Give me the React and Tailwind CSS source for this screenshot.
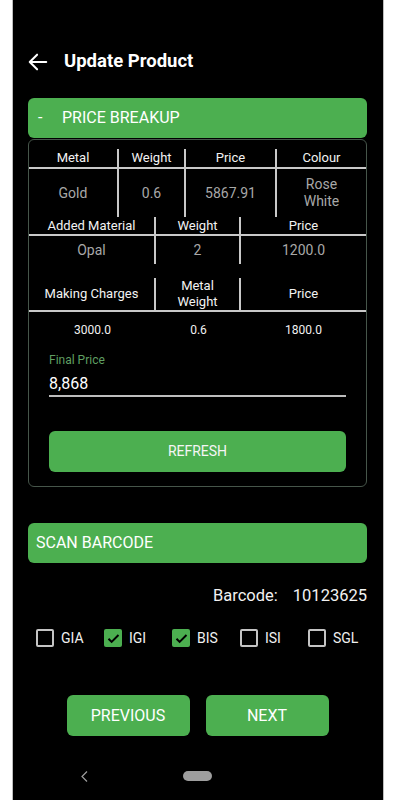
import { useState } from 'react';

const GREEN = 'bg-[#4caf50]';

function Cell({ children, className = '', divider = true }) {
  return (
    <div className={`flex items-center justify-center text-center leading-[16px] ${divider ? 'border-r-2 border-[#c9c9c9]' : ''} ${className}`}>
      {children}
    </div>
  );
}

function Check({ label, checked, onToggle }) {
  return (
    <button type="button" onClick={onToggle} className="flex w-[68px] shrink-0 items-center gap-[7px]">
      {checked ? (
        <span className="flex h-[18px] w-[18px] items-center justify-center rounded-[2px] bg-[#4caf50]">
          <svg width="15" height="15" viewBox="0 0 24 24" fill="none" stroke="#000" strokeWidth="3.2">
            <path d="M4 12.5l5 5L20 6.5" />
          </svg>
        </span>
      ) : (
        <span className="h-[18px] w-[18px] rounded-[2px] border-2 border-[#c4c4c4]" />
      )}
      <span className="text-[14px] text-[#f0f0f0]">{label}</span>
    </button>
  );
}

export default function App() {
  const [certs, setCerts] = useState({ GIA: false, IGI: true, BIS: true, ISI: false, SGL: false });

  return (
    <div className="flex h-[800px] w-[400px] overflow-hidden bg-white font-['Roboto',sans-serif]">
      <div className="w-[13px] shrink-0 border-r border-[#bdbdbd] bg-white" />

      <div className="flex w-[370px] shrink-0 flex-col bg-black pl-[15px] pr-[16px]">
        {/* toolbar */}
        <div className="mt-[46px] flex h-[32px] items-center">
          <svg width="22" height="22" viewBox="0 0 24 24" fill="none" stroke="#fff" strokeWidth="2.2" strokeLinecap="round" strokeLinejoin="round" className="-ml-[1px]">
            <path d="M21 12H3M11 4l-8 8 8 8" />
          </svg>
          <h1 className="ml-[15px] text-[18.5px] font-bold text-white">Update Product</h1>
        </div>

        {/* price breakup header */}
        <div className={`mt-[20px] flex h-[40px] items-center rounded-[6px] ${GREEN} text-[16px] text-white`}>
          <span className="ml-[10px] w-[24px]">-</span>
          <span>PRICE BREAKUP</span>
        </div>

        {/* card */}
        <div className="mt-[1px] rounded-[6px] border border-[#46554a] pb-[14px] pt-[9px]">
          {/* table 1 */}
          <div className="grid grid-cols-[90px_67px_91px_1fr] border-b-2 border-[#c9c9c9] text-[13px] text-[#f2f2f2]">
            <Cell className="h-[18px]">Metal</Cell>
            <Cell className="h-[18px]">Weight</Cell>
            <Cell className="h-[18px]">Price</Cell>
            <Cell className="h-[18px]" divider={false}>Colour</Cell>
          </div>
          <div className="grid grid-cols-[90px_67px_91px_1fr] text-[14px] text-[#a8a8a8]">
            <Cell className="h-[48px]">Gold</Cell>
            <Cell className="h-[48px]">0.6</Cell>
            <Cell className="h-[48px]">5867.91</Cell>
            <Cell className="h-[48px] leading-[17px]" divider={false}>Rose<br />White</Cell>
          </div>

          {/* table 2 */}
          <div className="grid grid-cols-[127px_85px_1fr] border-b-2 border-[#c9c9c9] text-[13px] text-[#f2f2f2]">
            <Cell className="h-[17px]">Added Material</Cell>
            <Cell className="h-[17px]">Weight</Cell>
            <Cell className="h-[17px]" divider={false}>Price</Cell>
          </div>
          <div className="grid grid-cols-[127px_85px_1fr] text-[14px] text-[#a8a8a8]">
            <Cell className="h-[28px]">Opal</Cell>
            <Cell className="h-[28px]">2</Cell>
            <Cell className="h-[28px]" divider={false}>1200.0</Cell>
          </div>

          {/* table 3 */}
          <div className="mt-[14px] grid grid-cols-[127px_85px_1fr] border-b-2 border-[#c9c9c9] text-[13px] text-[#f2f2f2]">
            <Cell className="h-[32px]">Making Charges</Cell>
            <Cell className="h-[32px] leading-[15px]">Metal<br />Weight</Cell>
            <Cell className="h-[32px]" divider={false}>Price</Cell>
          </div>
          <div className="grid grid-cols-[127px_85px_1fr] text-[12px] text-[#f2f2f2]">
            <Cell className="h-[35px]" divider={false}>3000.0</Cell>
            <Cell className="h-[35px]" divider={false}>0.6</Cell>
            <Cell className="h-[35px]" divider={false}>1800.0</Cell>
          </div>

          {/* final price */}
          <div className="mx-[20px] mt-[6px]">
            <div className="text-[12px] leading-[14px] text-[#5f9f62]">Final Price</div>
            <div className="mt-[6px] border-b-2 border-[#bdbdbd] text-[16px] leading-[22px] text-white">8,868</div>
            <button type="button" className={`mt-[34px] h-[41px] w-full rounded-[6px] ${GREEN} text-[14px] text-[#f5f5f5]`}>
              REFRESH
            </button>
          </div>
        </div>

        {/* scan barcode */}
        <div className={`mt-[36px] flex h-[40px] items-center rounded-[6px] ${GREEN} pl-[8px] text-[16px] text-white`}>
          SCAN BARCODE
        </div>

        <div className="mt-[21px] flex h-[24px] items-center justify-end text-[16.5px] text-[#f2f2f2]">
          <span>Barcode:</span>
          <span className="ml-[15px]">10123625</span>
        </div>

        <div className="ml-[8px] mt-[20px] flex h-[20px] items-center">
          {Object.keys(certs).map((k) => (
            <Check key={k} label={k} checked={certs[k]} onToggle={() => setCerts({ ...certs, [k]: !certs[k] })} />
          ))}
        </div>

        <div className="mt-[47px] flex justify-center gap-[16px]">
          <button type="button" className={`h-[41px] w-[123px] rounded-[6px] ${GREEN} text-[16px] text-white`}>PREVIOUS</button>
          <button type="button" className={`h-[41px] w-[123px] rounded-[6px] ${GREEN} text-[16px] text-white`}>NEXT</button>
        </div>

        {/* system nav */}
        <div className="mt-[30px] flex h-[20px] items-center">
          <svg width="7" height="11" viewBox="0 0 7 11" fill="none" stroke="#9e9e9e" strokeWidth="1.2" className="ml-[53px]">
            <path d="M6 0.5L1 5.5l5 5" />
          </svg>
          <span className="ml-[95px] h-[10px] w-[29px] rounded-full bg-[#9e9e9e]" />
        </div>
      </div>

      <div className="flex-1 border-l border-[#bdbdbd] bg-white" />
    </div>
  );
}
